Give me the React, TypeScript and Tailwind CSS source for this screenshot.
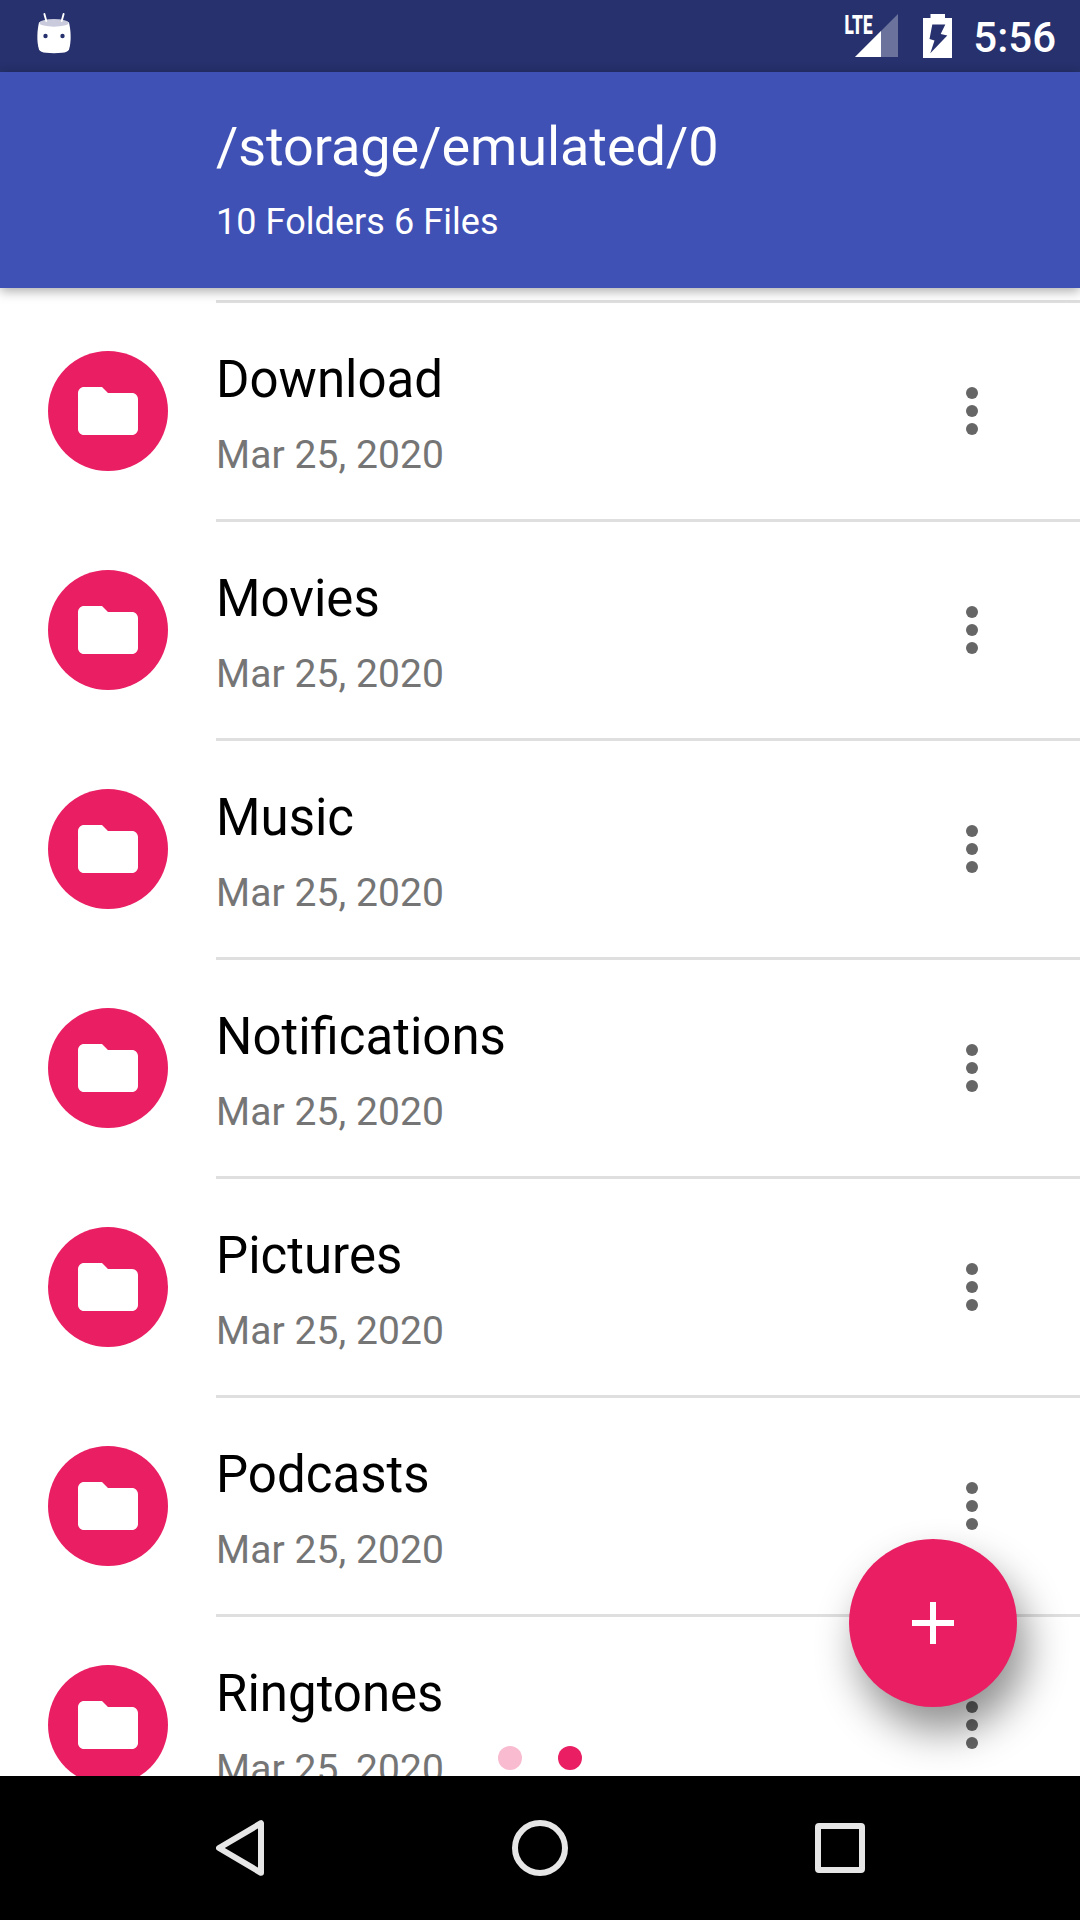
import React from "react";

const folders = [
  { name: "Download", date: "Mar 25, 2020" },
  { name: "Movies", date: "Mar 25, 2020" },
  { name: "Music", date: "Mar 25, 2020" },
  { name: "Notifications", date: "Mar 25, 2020" },
  { name: "Pictures", date: "Mar 25, 2020" },
  { name: "Podcasts", date: "Mar 25, 2020" },
  { name: "Ringtones", date: "Mar 25, 2020" },
];

function DebugIcon() {
  return (
    <svg width="36" height="42" viewBox="0 0 36 42" fill="none" aria-hidden="true">
      <path d="M3 10.5C6 7 30 7 33 10.5C34.8 18 35.6 29 33 37.5C32.3 39.6 29.5 40.4 26 40.8C21 41.3 15 41.3 10 40.8C6.500 40.4 3.700 39.6 3 37.5C0.400 29 1.200 18 3 10.5Z" fill="#fff" />
      <ellipse cx="18" cy="10.900" rx="14.600" ry="3.800" fill="#c9cadb" />
      <path d="M8.400 2L10.300 9M27.600 2L25.700 9" stroke="#fff" strokeWidth="1.900" strokeLinecap="round" />
      <circle cx="9.500" cy="24" r="2.200" fill="#26316d" />
      <circle cx="26.500" cy="24" r="2.200" fill="#26316d" />
    </svg>
  );
}

function SignalIcon() {
  return (
    <svg width="57" height="50" viewBox="-3 -6 57 50" aria-hidden="true">
      <path d="M53 0V43H10Z" fill="#fff" fillOpacity="0.32" />
      <path d="M36 17V43H10Z" fill="#fff" />
      <text x="-0.500" y="19.500" textLength="28" lengthAdjust="spacingAndGlyphs" fontFamily="Roboto, sans-serif" fontWeight="900" fontSize="25.500" fill="#fff">
        LTE
      </text>
    </svg>
  );
}

function BatteryIcon() {
  return (
    <svg width="29" height="44" viewBox="0 0 29 44" aria-hidden="true">
      <path d="M7.500 0H22V4H29V44H0V4H7.500Z" fill="#fff" />
      <path d="M9.300 10.500H22.300L17.700 20L24.300 21.500L7.300 39.300L11.500 26.500L6.500 25Z" fill="#26316d" />
    </svg>
  );
}

function StatusBar() {
  return (
    <div className="flex h-[72px] shrink-0 items-start bg-[#26316d] pl-9 pr-6">
      <div className="mt-3">
        <DebugIcon />
      </div>
      <div className="ml-auto flex items-start">
        <div className="mr-6 mt-2">
          <SignalIcon />
        </div>
        <div className="mt-3.5">
          <BatteryIcon />
        </div>
        <span className="ml-[21px] mt-[13px] text-[42px] font-medium leading-[49px] text-white">5:56</span>
      </div>
    </div>
  );
}

function Toolbar() {
  return (
    <header className="relative z-10 h-[216px] shrink-0 bg-[#3f51b5] pl-[216px] pt-[43px] text-white shadow-[0_3px_11px_rgba(0,0,0,0.34)]">
      <h1 className="text-[54px] leading-[63px] tracking-[-0.06px]">/storage/emulated/0</h1>
      <p className="mt-[23px] text-[36px] leading-[42px] tracking-[0.06px]">10 Folders 6 Files</p>
    </header>
  );
}

function FolderRow({ name, date }: { name: string; date: string }) {
  return (
    <li className="flex h-[219px] shrink-0">
      <div className="ml-12 mt-[51px] flex size-[120px] shrink-0 items-center justify-center rounded-full bg-[#e91e63]">
        <svg width="72" height="72" viewBox="0 0 24 24" fill="#fff" aria-hidden="true">
          <path d="M10 4H4c-1.100 0-1.990.9-1.990 2L2 18c0 1.100.9 2 2 2h16c1.100 0 2-.9 2-2V8c0-1.100-.9-2-2-2h-8l-2-2z" />
        </svg>
      </div>
      <div className="ml-12 flex grow border-t-[3px] border-[#dfdfdf]">
        <div className="pt-[47px]">
          <p className="text-[51px] leading-[59px] text-black">{name}</p>
          <p className="mt-[23px] text-[39px] leading-[46px] tracking-[0.08px] text-[#757575]">{date}</p>
        </div>
        <div className="ml-auto mr-[102px] mt-[84px] flex flex-col gap-1.5">
          <span className="size-3 rounded-full bg-[#666]" />
          <span className="size-3 rounded-full bg-[#666]" />
          <span className="size-3 rounded-full bg-[#666]" />
        </div>
      </div>
    </li>
  );
}

function NavigationBar() {
  return (
    <nav className="flex h-36 shrink-0 items-center bg-black px-[90px]">
      <div className="flex w-[300px] justify-center">
        <svg width="48" height="56" viewBox="0 0 48 56" fill="none" aria-hidden="true">
          <path d="M45 3.200V52.800L3 28Z" stroke="#e6e6e6" strokeWidth="6" strokeLinejoin="round" />
        </svg>
      </div>
      <div className="flex w-[300px] justify-center">
        <span className="size-14 rounded-full border-[6px] border-[#e6e6e6]" />
      </div>
      <div className="flex w-[300px] justify-center">
        <span className="size-[50px] rounded-[4px] border-[6px] border-[#e6e6e6]" />
      </div>
    </nav>
  );
}

export default function App() {
  return (
    <div className="flex h-[1920px] w-[1080px] flex-col overflow-hidden bg-white font-['Roboto',sans-serif]">
      <StatusBar />
      <Toolbar />
      <main className="relative min-h-0 grow overflow-hidden">
        <ul className="flex flex-col pt-3">
          {folders.map((folder) => (
            <FolderRow key={folder.name} name={folder.name} date={folder.date} />
          ))}
        </ul>
        <div className="absolute bottom-1.5 left-0 flex w-full justify-center gap-9">
          <span className="size-6 rounded-full bg-[#f8bbd0]" />
          <span className="size-6 rounded-full bg-[#e91e63]" />
        </div>
        <button
          type="button"
          aria-label="Add"
          className="absolute bottom-[69px] right-[63px] flex size-[168px] items-center justify-center rounded-full bg-[#e91e63] shadow-[9px_24px_42px_rgba(0,0,0,0.44)]"
        >
          <svg width="72" height="72" viewBox="0 0 24 24" fill="#fff" aria-hidden="true">
            <path d="M19 13h-6v6h-2v-6H5v-2h6V5h2v6h6v2z" />
          </svg>
        </button>
      </main>
      <NavigationBar />
    </div>
  );
}
